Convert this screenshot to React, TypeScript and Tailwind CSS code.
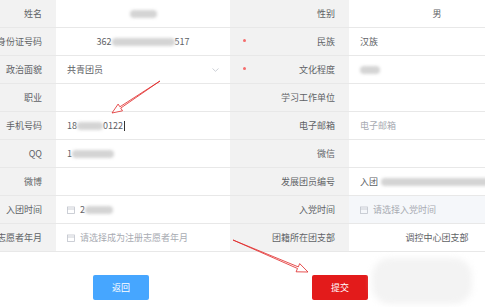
import React from 'react';

const Blur = ({ w, className = '' }: { w: number; className?: string }) => (
  <span
    className={`inline-block h-[8px] rounded-sm bg-[#d4d4d4] blur-[1.5px] ${className}`}
    style={{ width: w }}
  />
);

const Calendar = () => (
  <svg width="8" height="8" viewBox="0 0 8 8" className="mr-[5px] shrink-0">
    <rect x="0.5" y="1" width="7" height="6.5" fill="none" stroke="#c0c4cc" strokeWidth="0.8" />
    <line x1="0.5" y1="3" x2="7.5" y2="3" stroke="#c0c4cc" strokeWidth="0.8" />
  </svg>
);

const Label = ({ children, required }: { children: React.ReactNode; required?: boolean }) => (
  <div className="relative flex h-full items-center justify-end whitespace-nowrap bg-[#f2f2f2] pr-[14px] text-[#606266]">
    {required && <span className="absolute left-[13px] top-[11px] h-[3px] w-[3px] rounded-full bg-[#f56c6c]" />}
    {children}
  </div>
);

const Cell = ({ children, className = '' }: { children?: React.ReactNode; className?: string }) => (
  <div className={`flex h-full items-center whitespace-nowrap bg-white px-[11px] text-[#606266] ${className}`}>
    {children}
  </div>
);

export default function App() {
  return (
    <div
      className="relative h-[307px] w-[485px] overflow-hidden bg-white text-[9px]"
      style={{ fontFamily: '"Noto Sans CJK SC", "Noto Sans", sans-serif' }}
    >
      <div className="grid w-[525px] grid-cols-[56px_174px_119px_176px] grid-rows-[repeat(9,28px)]">
        {/* row 1 */}
        <div className="contents">
          <div className="border-b border-[#e8e8e8]"><Label>姓名</Label></div>
          <div className="border-b border-[#e8e8e8]"><Cell className="justify-center"><Blur w={27} /></Cell></div>
          <div className="border-b border-[#e8e8e8]"><Label>性别</Label></div>
          <div className="border-b border-[#e8e8e8]"><Cell className="justify-center">男</Cell></div>
        </div>
        {/* row 2 */}
        <div className="border-b border-[#e8e8e8]"><Label>身份证号码</Label></div>
        <div className="border-b border-[#e8e8e8]">
          <Cell className="justify-center">362<Blur w={63} />517</Cell>
        </div>
        <div className="border-b border-[#e8e8e8]"><Label required>民族</Label></div>
        <div className="border-b border-[#e8e8e8]"><Cell>汉族</Cell></div>
        {/* row 3 */}
        <div className="border-b border-[#e8e8e8]"><Label>政治面貌</Label></div>
        <div className="border-b border-[#e8e8e8]">
          <Cell className="justify-between">
            共青团员
            <svg width="7" height="4" viewBox="0 0 7 4">
              <path d="M0.5 0.5 L3.5 3.3 L6.5 0.5" fill="none" stroke="#c0c4cc" strokeWidth="0.8" />
            </svg>
          </Cell>
        </div>
        <div className="border-b border-[#e8e8e8]"><Label required>文化程度</Label></div>
        <div className="border-b border-[#e8e8e8]"><Cell><Blur w={20} /></Cell></div>
        {/* row 4 */}
        <div className="border-b border-[#e8e8e8]"><Label>职业</Label></div>
        <div className="border-b border-[#e8e8e8]"><Cell /></div>
        <div className="border-b border-[#e8e8e8]"><Label>学习工作单位</Label></div>
        <div className="border-b border-[#e8e8e8]"><Cell /></div>
        {/* row 5 */}
        <div className="border-b border-[#e8e8e8]"><Label>手机号码</Label></div>
        <div className="border-b border-[#e8e8e8]">
          <Cell>
            18<Blur w={26} />0122<span className="ml-[1px] inline-block h-[10px] w-px bg-[#333]" />
          </Cell>
        </div>
        <div className="border-b border-[#e8e8e8]"><Label>电子邮箱</Label></div>
        <div className="border-b border-[#e8e8e8]"><Cell className="text-[#a8abb2]">电子邮箱</Cell></div>
        {/* row 6 */}
        <div className="border-b border-[#e8e8e8]"><Label>QQ</Label></div>
        <div className="border-b border-[#e8e8e8]"><Cell>1<Blur w={42} /></Cell></div>
        <div className="border-b border-[#e8e8e8]"><Label>微信</Label></div>
        <div className="border-b border-[#e8e8e8]"><Cell /></div>
        {/* row 7 */}
        <div className="border-b border-[#e8e8e8]"><Label>微博</Label></div>
        <div className="border-b border-[#e8e8e8]"><Cell /></div>
        <div className="border-b border-[#e8e8e8]"><Label>发展团员编号</Label></div>
        <div className="border-b border-[#e8e8e8]"><Cell>入团<Blur w={130} className="ml-[3px]" /></Cell></div>
        {/* row 8 */}
        <div className="border-b border-[#e8e8e8]"><Label>入团时间</Label></div>
        <div className="border-b border-[#e8e8e8]"><Cell><Calendar />2<Blur w={28} /></Cell></div>
        <div className="border-b border-[#e8e8e8]"><Label>入党时间</Label></div>
        <div className="border-b border-[#e8e8e8]">
          <Cell className="!bg-[#f5f7fa] text-[#a8abb2]"><Calendar />请选择入党时间</Cell>
        </div>
        {/* row 9 */}
        <div className="border-b border-[#e8e8e8]"><Label>注册志愿者年月</Label></div>
        <div className="border-b border-[#e8e8e8]">
          <Cell className="text-[#a8abb2]"><Calendar />请选择成为注册志愿者年月</Cell>
        </div>
        <div className="border-b border-[#e8e8e8]"><Label>团籍所在团支部</Label></div>
        <div className="border-b border-[#e8e8e8]"><Cell className="justify-center">调控中心团支部</Cell></div>
      </div>

      <div className="mt-[23px] flex">
        <button className="ml-[93px] h-[25px] w-[56px] rounded-[2px] bg-[#46a6ff] text-[9px] text-white">返回</button>
        <button className="ml-[163px] h-[25px] w-[56px] rounded-[2px] bg-[#e31b1b] text-[9px] text-white">提交</button>
      </div>

      {/* redaction smear */}
      <div className="pointer-events-none absolute left-[372px] top-[258px] h-[46px] w-[100px] rounded-[18px] bg-[#f3f3f3] blur-[3px]" />

      {/* annotation arrows */}
      <svg className="pointer-events-none absolute inset-0" width="485" height="307" viewBox="0 0 485 307">
        <polygon
          points="112,113 122.5,110.8 120.7,108.1 160,81 119.9,106.8 118.1,104.1"
          fill="#fff"
          stroke="#e02424"
          strokeWidth="0.8"
          strokeLinejoin="round"
        />
        <polygon
          points="308,272 296.1,271.8 297.5,268.5 233,240 298.3,266.9 299.7,263.6"
          fill="#fff"
          stroke="#e02424"
          strokeWidth="0.8"
          strokeLinejoin="round"
        />
      </svg>
    </div>
  );
}
